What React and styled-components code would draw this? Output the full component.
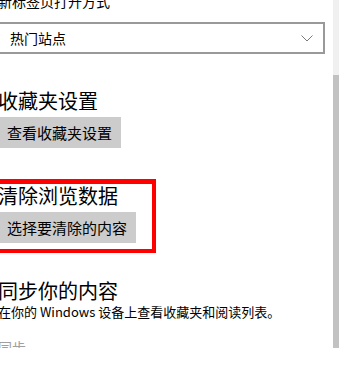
import React from "react"
import styled, { createGlobalStyle } from "styled-components"

const GlobalStyle = createGlobalStyle`
  html, body {
    margin: 0;
    padding: 0;
    background: #ffffff;
  }
  body {
    font-family: "Noto Sans CJK SC", "Noto Sans", sans-serif;
    color: #000000;
  }
`

const Frame = styled.div`
  display: flex;
  width: 344px;
  height: 348px;
  overflow: hidden;
`

const Pane = styled.div`
  flex: 1;
  min-width: 0;
  overflow: hidden;
`

const Content = styled.div`
  margin-top: -9px;
  margin-left: -2px;
  display: flex;
  flex-direction: column;
  align-items: flex-start;
`

const Label = styled.div`
  font-size: 14px;
  line-height: 20px;
  margin-bottom: 11px;
`

const Select = styled.div`
  box-sizing: border-box;
  width: 327px;
  height: 32px;
  border: 2px solid #999999;
  display: flex;
  align-items: center;
  justify-content: space-between;
  padding: 0 10px 0 10px;
  font-size: 14px;
`

const Heading = styled.h2`
  margin: ${(p) => p.$top || 0}px 0 0 0;
  font-size: 20px;
  font-weight: 400;
  line-height: 24px;
`

const Button = styled.button`
  margin-top: 4px;
  height: 31px;
  border: none;
  background: #cccccc;
  padding: 0 9px;
  font-family: inherit;
  font-size: 15px;
  color: #000000;
`

const Highlight = styled.section`
  box-sizing: border-box;
  width: 166px;
  margin: 31px 0 0 -8px;
  border: 4px solid #ff0000;
  border-top-width: 5px;
  padding: 0 0 6px 4px;
  display: flex;
  flex-direction: column;
  align-items: flex-start;
`

const Note = styled.p`
  margin: 0;
  font-size: 13px;
  line-height: 17px;
`

const Muted = styled.div`
  margin-top: 17px;
  font-size: 14px;
  line-height: 20px;
  color: #a0a0a0;
`

const Track = styled.div`
  width: 6px;
  margin-right: 5px;
  background: #f0f0f0;
  display: flex;
  flex-direction: column;
`

const Thumb = styled.div`
  margin-top: auto;
  height: 273px;
  background: #c2c2c2;
`

const Chevron = () => (
  <svg width="12" height="7" viewBox="0 0 12 7" fill="none">
    <path d="M0.5 0.5 L6 6 L11.5 0.5" stroke="#7a7a7a" strokeWidth="1" />
  </svg>
)

export default function App() {
  return (
    <>
      <GlobalStyle />
      <Frame>
        <Pane>
          <Content>
            <Label>新标签页打开方式</Label>
            <Select>
              <span>热门站点</span>
              <Chevron />
            </Select>
            <Heading $top={35}>收藏夹设置</Heading>
            <Button>查看收藏夹设置</Button>
            <Highlight>
              <Heading>清除浏览数据</Heading>
              <Button>选择要清除的内容</Button>
            </Highlight>
            <Heading $top={26}>同步你的内容</Heading>
            <Note>在你的 Windows 设备上查看收藏夹和阅读列表。</Note>
            <Muted>同步</Muted>
          </Content>
        </Pane>
        <Track>
          <Thumb />
        </Track>
      </Frame>
    </>
  )
}
